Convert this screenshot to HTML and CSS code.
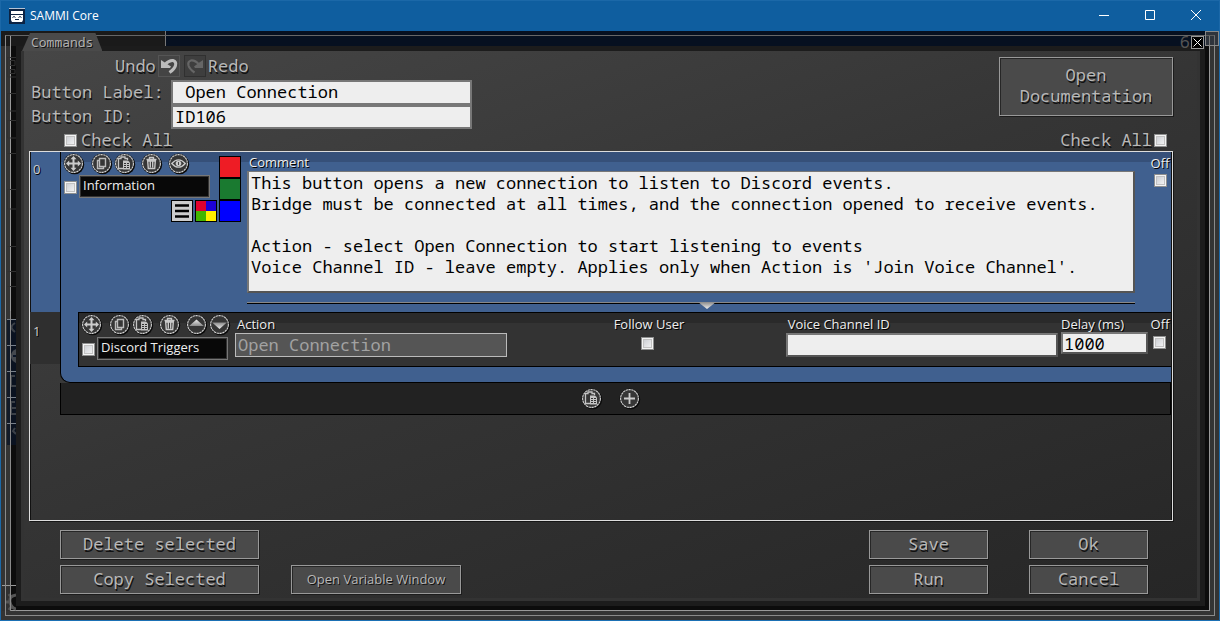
FILE: index.html
```html
<!DOCTYPE html>
<html lang="en">
<head>
<meta charset="utf-8">
<title>SAMMI Core</title>
<link rel="stylesheet" href="styles.css">
</head>
<body>
<svg class="sprite" aria-hidden="true">
  <defs>
    <linearGradient id="metal" x1="0" y1="0" x2="0" y2="1"><stop offset="0" stop-color="#eee"/><stop offset="1" stop-color="#8a8a8a"/></linearGradient>
    <linearGradient id="metal-down" x1="0" y1="0" x2="0" y2="1"><stop offset="0" stop-color="#8a8a8a"/><stop offset="1" stop-color="#eee"/></linearGradient>
    <symbol id="disc" viewBox="0 0 22 22">
      <circle cx="11.6" cy="11.6" r="9.6" fill="#0a0a0a"/>
      <circle cx="10.5" cy="10.5" r="10" fill="#111"/>
      <circle cx="10.5" cy="10.5" r="8.9" fill="#363636" stroke="#d2d2d2" stroke-width="1.1" stroke-dasharray="2.4 .5"/>
    </symbol>
    <symbol id="move" viewBox="0 0 22 22"><use href="#disc"/><path fill="#ccc" d="M10.5 3l3 3.2h-2v3.3h3.300V7.500l3.200 3-3.200 3v-2h-3.300v3.300h2l-3 3.200-3-3.200h2v-3.300H6.200v2L3 10.500l3.200-3v2h3.300V6.200h-2z"/></symbol>
    <symbol id="copy" viewBox="0 0 22 22"><use href="#disc"/><path fill="none" stroke="#bbb" stroke-width="1.400" d="M8.500 5.500h6v8h-6zM8 7.500H6.500v8h6V14"/></symbol>
    <symbol id="paste" viewBox="0 0 22 22"><use href="#disc"/><path fill="none" stroke="#c4c4c4" stroke-width="1.300" d="M9 15.500H4.500v-10H7V4h4v1.500h2.500V7"/><path fill="#c4c4c4" d="M9 7.500h5l2 2v7H9z"/><path stroke="#333" d="M10 10.500h2m1 0h2M10 12.500h2m1 0h2M10 14.500h2m1 0h2"/></symbol>
    <symbol id="trash" viewBox="0 0 22 22"><use href="#disc"/><path fill="none" stroke="#c8c8c8" stroke-width="1.400" d="M5.500 6.500h10M8.500 6V4.500h4V6M6.700 8l.6 7.500h6.400l.6-7.500zM9.300 8.500v6M11.700 8.500v6"/></symbol>
    <symbol id="eye" viewBox="0 0 22 22"><use href="#disc"/><path fill="none" stroke="#c8c8c8" stroke-width="1.300" d="M3.800 10.500q3.200-3.700 6.700-3.700t6.700 3.700q-3.200 3.700-6.700 3.700t-6.700-3.700z"/><circle cx="10.500" cy="10.500" r="2.800" fill="#c8c8c8"/><path stroke="#444" d="M10.500 9v3"/></symbol>
    <symbol id="up" viewBox="0 0 22 22"><use href="#disc"/><path fill="url(#metal)" d="M10.500 5.500l7.300 6.500H3.200z"/></symbol>
    <symbol id="down" viewBox="0 0 22 22"><use href="#disc"/><path fill="url(#metal-down)" d="M10.500 15L3.200 8.500h14.600z"/></symbol>
    <symbol id="plus" viewBox="0 0 22 22"><use href="#disc"/><path fill="none" stroke="#ccc" stroke-width="1.800" d="M10.500 5v11M5 10.500h11"/></symbol>
  </defs>
</svg>

<div class="window">
  <header class="titlebar">
    <svg class="logo" viewBox="0 0 16 16" aria-hidden="true"><path fill="#0c2343" d="M0 0h16v16H0z"/><path fill="#b6c4d6" d="M0 0h16v1H0z"/><path fill="#fff" d="M2 3h12v3H2zM2 7h12v5l-1 2H3l-1-2z"/><path fill="none" stroke="#0c2343" d="M3.500 9.500q1.500-2 3 0M9.500 9.500q1.500-2 3 0M6 11.500h4"/></svg>
    <span class="title">SAMMI Core</span>
    <div class="controls">
      <button aria-label="Minimize"><svg viewBox="0 0 10 10"><path d="M0 5.500h10"/></svg></button>
      <button aria-label="Maximize"><svg viewBox="0 0 10 10"><path d="M.5.5h9v9h-9z"/></svg></button>
      <button aria-label="Close"><svg viewBox="0 0 10 10"><path d="M0 0l10 10M10 0L0 10"/></svg></button>
    </div>
  </header>

  <div class="desktop">
    <div class="rail"><div class="rail-inner">
      <main class="dialog">
        <h1 class="tab">Commands</h1>
        <button class="close" aria-label="Close dialog"><svg viewBox="0 0 9 9"><path d="M.5.5l8 8M8.500.5l-8 8"/></svg></button>

        <div class="panel">
          <section class="head">
            <div class="identity">
              <div class="history">
                <label for="undo">Undo</label>
                <button id="undo" class="step"><svg viewBox="0 0 20 20"><path fill="none" stroke="#bbb" stroke-width="3" d="M6 8.500Q10 4 14 4.500q3.500 1 2.500 5-1 3.500-6 7"/><path fill="#bbb" d="M2 4l3 2 7 4.500-1 1.500H2z"/></svg></button>
                <button id="redo" class="step off" disabled><svg viewBox="0 0 20 20"><path fill="none" stroke="#666" stroke-width="2.200" d="M14 8.500Q10 4 6 4.500q-3.500 1-2.500 5 1 3.500 6 7"/><path fill="#666" d="M18 4l-3 2-6 4.500 1 1.500h8z"/></svg></button>
                <label for="redo">Redo</label>
              </div>
              <div class="fields">
                <label for="blabel">Button Label:</label><input id="blabel" class="inset" value=" Open Connection">
                <label for="bid">Button ID:</label><input id="bid" class="inset" value="ID106">
              </div>
            </div>
            <button class="btn doc">Open<br>Documentation</button>
          </section>
          <div class="checkall">
            <label><input type="checkbox">Check All</label>
            <label>Check All<input type="checkbox"></label>
          </div>

          <section class="list">
            <div class="gutter"><div class="num first">0</div><div class="num second">1</div></div>
            <div class="commands">
              <div class="group">
                <div class="row info">
                  <div class="tools">
                    <div class="icons">
                      <button aria-label="Move"><svg><use href="#move"/></svg></button>
                      <button aria-label="Copy" class="far"><svg><use href="#copy"/></svg></button>
                      <button aria-label="Paste"><svg><use href="#paste"/></svg></button>
                      <button aria-label="Delete" class="mid"><svg><use href="#trash"/></svg></button>
                      <button aria-label="Hide" class="mid"><svg><use href="#eye"/></svg></button>
                    </div>
                    <div class="name"><input type="checkbox" aria-label="Select command 0"><input class="kind" aria-label="Command 0 type" value="Information"></div>
                    <div class="marks">
                      <button class="chip lines" aria-label="Menu"><svg viewBox="0 0 20 20"><path d="M3 4.500h14M3 10h14M3 15.500h14"/></svg></button>
                      <button class="chip quad" aria-label="Palette"></button>
                    </div>
                  </div>
                  <div class="swatches">
                    <button class="chip red" aria-label="Red"></button>
                    <button class="chip green" aria-label="Green"></button>
                    <button class="chip blue" aria-label="Blue"></button>
                  </div>
                  <div class="comment">
                    <label for="comment">Comment</label>
                    <textarea id="comment" class="inset" spellcheck="false">This button opens a new connection to listen to Discord events.
Bridge must be connected at all times, and the connection opened to receive events.

Action - select Open Connection to start listening to events
Voice Channel ID - leave empty. Applies only when Action is 'Join Voice Channel'.</textarea>
                    <div class="divider"><svg viewBox="0 0 18 7" aria-hidden="true"><path fill="url(#metal-down)" d="M0 0h18L9 7z"/></svg></div>
                  </div>
                  <div class="off-col"><label for="off0">Off</label><input id="off0" type="checkbox"></div>
                </div>

                <div class="row trigger">
                  <div class="tools">
                    <div class="icons">
                      <button aria-label="Move"><svg><use href="#move"/></svg></button>
                      <button aria-label="Copy" class="far"><svg><use href="#copy"/></svg></button>
                      <button aria-label="Paste"><svg><use href="#paste"/></svg></button>
                      <button aria-label="Delete" class="mid"><svg><use href="#trash"/></svg></button>
                      <button aria-label="Move up" class="mid"><svg><use href="#up"/></svg></button>
                      <button aria-label="Move down"><svg><use href="#down"/></svg></button>
                    </div>
                    <div class="name"><input type="checkbox" aria-label="Select command 1"><input class="kind" aria-label="Command 1 type" value="Discord Triggers"></div>
                  </div>
                  <div class="param"><label for="action">Action</label><input id="action" class="ghosted" value="Open Connection"></div>
                  <div class="param center"><label for="follow">Follow User</label><input id="follow" type="checkbox"></div>
                  <div class="param"><label for="voice">Voice Channel ID</label><input id="voice" class="inset"></div>
                  <div class="param delay"><label for="delay">Delay (ms)</label><input id="delay" class="inset" value="1000"></div>
                  <div class="off-col"><label for="off1">Off</label><input id="off1" type="checkbox"></div>
                </div>
              </div>
              <div class="addbar">
                <button aria-label="Paste here"><svg><use href="#paste"/></svg></button>
                <button aria-label="Add command"><svg><use href="#plus"/></svg></button>
              </div>
            </div>
          </section>

          <footer class="actions">
            <div class="stack wide"><button class="btn">Delete selected</button><button class="btn">Copy Selected</button></div>
            <button class="btn var">Open Variable Window</button>
            <div class="stack push"><button class="btn">Save</button><button class="btn">Run</button></div>
            <div class="stack"><button class="btn">Ok</button><button class="btn">Cancel</button></div>
          </footer>
        </div>
      </main>
    </div></div>
    <span class="counter" aria-hidden="true">6</span>
    <div class="scroll"></div>
    <svg class="ghost" width="16" height="580" aria-hidden="true">
      <g fill="none" stroke="#303030"><path d="M7.500 26.500H16M7.500 26v20H16M10 29.500h5v5h-5zM10 38.500h5v4h-5zM7.500 62.500H16M7.500 62v18H16M7.500 89.500H16M7.500 89v18H16M7.500 122.500H16M7.500 158.500H16M7.500 158v20H16M7.500 215.500H16M7.500 240.500H16M7.500 255.500H16"/></g>
      <path fill="#0a1426" fill-opacity=".8" d="M7 289h9v125H7z"/>
      <g fill="none" stroke="#78808a"><path d="M7 288.500h9M7 314.500h9M7 340.500h9M7 366.500h9M7 392.500h9"/></g>
      <g fill="none" stroke="#3b4047" stroke-width="2"><path d="M15 292q-7 4 0 9M15 345h-4v10h5M15 371h-4v12h5M11 377h5M15 397l-2 3 3 3"/></g>
      <path fill="#44484e" d="M16 318q-5 2-5 7t5 7z"/><path stroke="#0a1426" stroke-width="2" d="M13 325h3"/>
      <path stroke="#999" d="M2 554.500h14"/><path fill="#303030" d="M2 556h3v24H2zM6 556h4v24H6z"/>
      <path fill="none" stroke="#555" stroke-width="3" d="M16 564q-7 1-6 7t6 7M6 571h4M9 563l2 3M9 579l2-3"/>
      <path stroke="#8a8a8a" d="M5.500 280v300M10.500 280v300"/>
    </svg>
  </div>
</div>
</body>
</html>
```
FILE: styles.css
```css
:root {
  --mono: "Noto Sans Mono", "DejaVu Sans Mono", monospace;
  --sans: "Open Sans", "Noto Sans", sans-serif;
  --blue: #40608f;
}
* { box-sizing: border-box; }
body { margin: 0; font: 13px/16px var(--sans); color: #ddd; background: #111; }
button, input, textarea { font: inherit; color: inherit; margin: 0; padding: 0; border: 0; border-radius: 0; background: none; outline: 0; }
button { display: block; }
svg { display: block; }
.sprite { position: absolute; width: 0; height: 0; }

.window { display: flex; flex-direction: column; height: 100vh; border: 1px solid #1b68a8; border-bottom-color: #1b70b4; }
.titlebar { display: flex; align-items: center; flex: none; height: 30px; padding-left: 8px; background: #0f5e9f; color: #fff; font: 12px/16px "Open Sans", sans-serif; }
.logo { width: 16px; height: 16px; margin-right: 5px; }
.controls { display: flex; margin-left: auto; }
.controls button { width: 46px; height: 30px; padding: 9px 18px 11px; }
.controls svg { width: 10px; height: 10px; fill: none; stroke: #fff; overflow: visible; }

.desktop { position: relative; flex: 1; min-height: 0; padding: 4px; background: linear-gradient(90deg, #1a1a1a 164px, #777 164px, #777 165px, #061020 165px) top / 100% 15px no-repeat, #343434; }
.rail { height: 100%; border: 1px solid #8a8a8a; border-top-color: #666; padding: 0 4px 4px; }
.rail-inner { height: 100%; border: 1px solid #999; border-top: 0; padding: 10px 4px 4px 5px; background: linear-gradient(#0000 10px, #0c0c0c 10px); }
.counter { position: absolute; top: 1px; right: 29px; font: 17px/20px var(--mono); color: #555; }
.scroll { position: absolute; top: 0; right: 0; width: 14px; height: 15px; border: 1px solid #888; background: #5558; }
.ghost { position: absolute; left: -1px; top: 0; }

.dialog { position: relative; height: 100%; padding: 5px; background: #1c1c1c; }
.tab { position: absolute; left: 6px; top: -13px; margin: 0; padding: 0 9px; font: 13px/18px var(--mono); color: #b0b0b0; background: #4a4a4a; clip-path: polygon(8px 0, calc(100% - 7px) 0, 100% 100%, 0 100%); text-shadow: 1px 1px #111; }
.close { position: absolute; right: 1px; top: -10px; width: 13px; height: 13px; padding: 1px; border: 1px solid #999; background: #000; }
.close svg { width: 9px; height: 9px; fill: none; stroke: #fff; }

.panel { display: flex; flex-direction: column; height: 100%; padding: 4px 24px 4px 5px; border: solid #333; border-width: 0 3px 3px; background: linear-gradient(160deg, #464646, #353535 45%, #262626); font: 17px/22px var(--mono); color: #b8b8b8; text-shadow: 1px 2px #111; }
.head { display: flex; justify-content: space-between; align-items: flex-start; }
.history { display: flex; gap: 2px; margin-left: 86px; height: 22px; }
.step { width: 22px; height: 22px; border: 1px solid #555; background: #444; }
.step.off { margin-left: 2px; border-color: #303030; background: #3e3e3e; }
.fields { display: grid; grid-template-columns: 142px 301px; align-items: center; margin-top: 3px; }
.fields label { margin-left: 2px; padding-bottom: 2px; }
.fields input { height: 25px; padding: 0 2px 2px; }
.fields input + label + input { height: 24px; }
.inset { background: #eee; color: #000; border: 2px solid #777; border-color: #777 #555 #555 #777; text-shadow: none; }
.fields .inset { border-color: #777; }
.btn { padding-bottom: 2px; border: 1px solid #999; background: #4a4a4a; box-shadow: inset 1px 1px #262626, 1px 1px #1c1c1c; text-shadow: 1px 2px #111; color: #b8b8b8; }
.doc { width: 174px; height: 59px; margin-top: 2px; padding-bottom: 4px; line-height: 21px; }
.checkall { display: flex; justify-content: space-between; height: 22px; padding: 0 6px 0 35px; }
.checkall label { display: flex; align-items: center; gap: 4px; }
.checkall label:last-child { gap: 2px; }
input[type="checkbox"] { appearance: none; flex: none; width: 13px; height: 13px; border: 1px solid #8e8f8f; background: linear-gradient(135deg, #c4c7cd, #fafafa); box-shadow: inset 0 0 0 1px #f4f4f4, inset 0 0 0 2px #c2c2c2; }

.list { display: grid; grid-template-columns: 30px 1fr; align-items: start; flex: 1; min-height: 0; border: 1px solid #ddd; box-shadow: inset 1px 0 #111, inset -1px 0 #111, 1px 1px #161616; font: 13px/16px var(--sans); color: #eee; text-shadow: 1px 1px #000; }
.num { padding: 9px 3px; color: #ccc; }
.first { height: 160px; margin-left: 1px; padding-left: 2px; background: var(--blue); }
.second { height: 52px; padding-top: 11px; background: #2f2f2f; }
.commands { min-width: 0; margin-right: 1px; }
.group { padding-bottom: 15px; border: solid #000; border-width: 0 0 1px 1px; border-bottom-left-radius: 10px; background: linear-gradient(#365079 10px, var(--blue) 10px); }
.row { display: flex; }
.info { height: 160px; padding-left: 3px; }
.icons { display: flex; gap: 2px; height: 22px; padding-top: 1px; margin-left: -1px; }
.icons svg, .addbar svg { width: 22px; height: 22px; }
.icons button { width: 21px; height: 22px; }
.far { margin-left: 5px; }
.mid { margin-left: 4px; }
.name { display: flex; align-items: center; gap: 2px; margin-top: 1px; }
.name input[type="checkbox"] { margin-top: 2px; }
.kind { width: 131px; height: 23px; padding: 0 3px 3px; border: 1px solid #777; box-shadow: inset 0 0 0 1px #333; background: #080808; color: #eee; text-shadow: none; }
.marks { display: flex; gap: 2px; justify-content: flex-end; margin: 2px -7px 0 0; }
.chip { width: 22px; height: 22px; border: 1px solid #000; }
.lines { background: #ccc; }
.lines svg { width: 20px; height: 20px; stroke: #000; stroke-width: 2.500; }
.quad { background: conic-gradient(#1d00d8 25%, #fff000 0 50%, #43b500 0 75%, #e0002e 0); }
.swatches { margin: 4px 6px 0 9px; }
.red { background: #ee1c25; }
.green { background: #1a7a30; }
.blue { background: #00f; }
.comment { display: flex; flex-direction: column; flex: 1; min-width: 0; padding-top: 2px; }
.comment label { margin: 0 0 1px 2px; }
textarea { height: 122px; padding: 0 2px; resize: none; font: 17px/21px var(--mono); overflow: hidden; }
textarea.inset { border-top-width: 1px; }
.divider { height: 2px; margin-top: 9px; border-top: 1px solid #888; background: #000; }
.divider svg { position: relative; width: 18px; height: 7px; margin: -1px auto 0; left: 16px; }
.off-col { display: flex; flex-direction: column; align-items: center; width: 22px; padding-top: 3px; }
.off-col input { margin-top: 3px; }
.info .off-col { margin-left: 14px; }
.trigger { height: 55px; margin-left: 17px; padding-left: 3px; border: solid #000; border-width: 1px 0 1px 1px; background: linear-gradient(#2a2a2a 10px, #333 10px); }
.trigger .icons { height: 23px; padding-top: 0; margin-top: 1px; }
.trigger .name { margin-top: 0; }
.trigger .tools { width: 153px; flex: none; }
.param { display: flex; flex-direction: column; flex: 1 1 0; min-width: 0; padding-top: 3px; }
.param label { margin: 0 0 1px 2px; }
.param > input:not([type]) { height: 24px; margin-right: 3px; padding: 0 2px; font: 17px/20px var(--mono); }
.param .ghosted { background: #555; border: 1px solid #bbb; color: #a2a2a2; text-shadow: none; }
.param > .ghosted:not([type]) { padding-bottom: 2px; }
.param.center { align-items: center; }
.center input { margin-top: 4px; }
.param.delay { flex: none; width: 88px; }
.param.delay label { margin-left: 0; }
.param.delay > input:not([type]) { height: 22px; margin: -1px 1px 0 0; padding: 0 1px; }
.trigger .off-col input { margin-top: 4px; }
.addbar { display: flex; align-items: center; justify-content: center; gap: 16px; height: 32px; padding-right: 10px; border: 1px solid #000; border-top: 0; background: #222; }

.actions { display: flex; align-items: flex-end; flex: none; gap: 41px; padding: 9px 25px 0 31px; }
.stack { display: flex; flex-direction: column; gap: 6px; width: 119px; }
.stack.wide { width: 199px; }
.stack .btn { height: 29px; line-height: 24px; }
.push { margin-left: auto; }
.var { width: 170px; height: 29px; margin-left: -9px; font: 13px/16px var(--sans); text-shadow: 1px 1px #111; }
```
